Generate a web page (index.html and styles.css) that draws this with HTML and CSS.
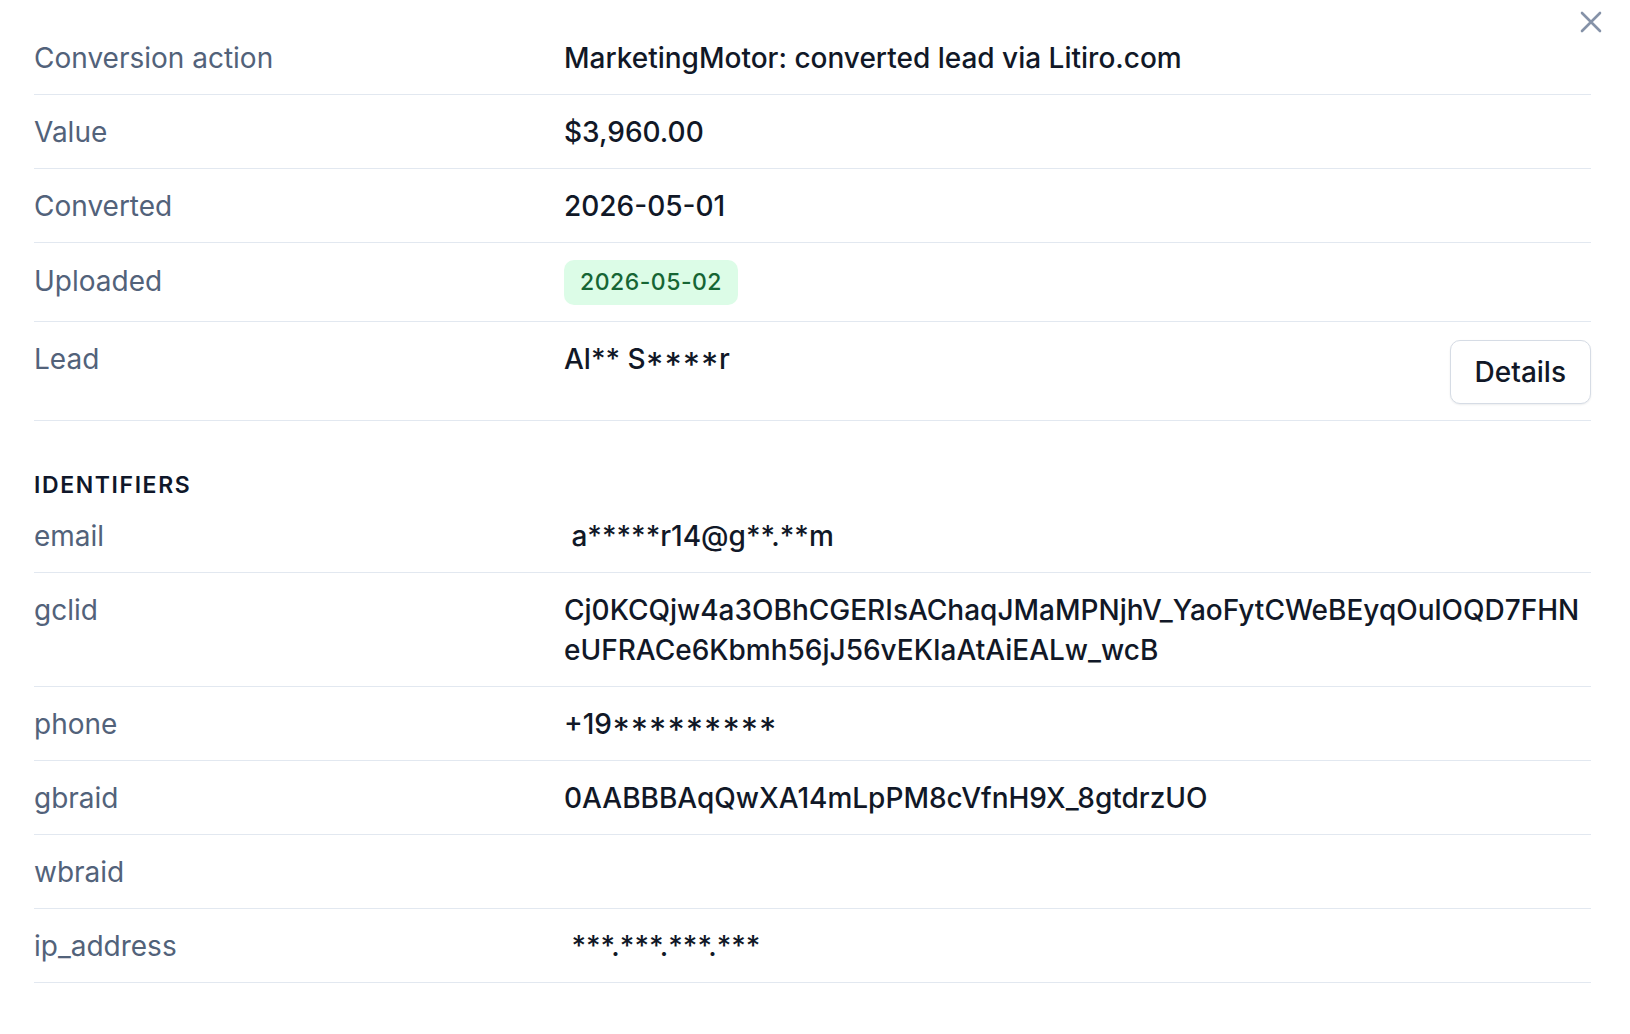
FILE: index.html
```html
<!DOCTYPE html>
<html lang="en">
<head>
    <meta charset="UTF-8">
    <title>Conversion details</title>
    <meta name="viewport" content="width=device-width, initial-scale=1.0">
    <link rel="stylesheet" href="styles.css">
</head>
<body>
    <div id="drawer">
        <button class="close-button" aria-label="Close">
            <svg width="22" height="22" viewBox="0 0 22 22" fill="none" stroke="currentColor" stroke-width="2.6" stroke-linecap="round">
                <path d="M2 2L20 20M20 2L2 20"/>
            </svg>
        </button>

        <div class="detail-list">
            <div class="detail-row">
                <div class="detail-label">Conversion action</div>
                <div class="detail-value">MarketingMotor: converted lead via Litiro.com</div>
            </div>
            <div class="detail-row">
                <div class="detail-label">Value</div>
                <div class="detail-value">$3,960.00</div>
            </div>
            <div class="detail-row">
                <div class="detail-label">Converted</div>
                <div class="detail-value">2026-05-01</div>
            </div>
            <div class="detail-row">
                <div class="detail-label label-badge">Uploaded</div>
                <div class="detail-value"><span class="badge badge-success">2026-05-02</span></div>
            </div>
            <div class="detail-row">
                <div class="detail-label">Lead</div>
                <div class="detail-value detail-value-split">
                    <span>Al** S<span class="case-stars">****</span>r</span>
                    <button class="secondary-button">Details</button>
                </div>
            </div>
        </div>

        <h3 class="section-title">IDENTIFIERS</h3>
        <div class="detail-list">
            <div class="detail-row">
                <div class="detail-label">email</div>
                <div class="detail-value masked"> a*****r14@g**.**m</div>
            </div>
            <div class="detail-row">
                <div class="detail-label">gclid</div>
                <div class="detail-value long-id">Cj0KCQjw4a3OBhCGERIsAChaqJMaMPNjhV_YaoFytCWeBEyqOulOQD7FHN<wbr>eUFRACe6Kbmh56jJ56vEKIaAtAiEALw_wcB</div>
            </div>
            <div class="detail-row">
                <div class="detail-label">phone</div>
                <div class="detail-value">+19<span class="case-stars">*********</span></div>
            </div>
            <div class="detail-row">
                <div class="detail-label">gbraid</div>
                <div class="detail-value">0AABBBAqQwXA14mLpPM8cVfnH9X_8gtdrzUO</div>
            </div>
            <div class="detail-row">
                <div class="detail-label">wbraid</div>
                <div class="detail-value"></div>
            </div>
            <div class="detail-row">
                <div class="detail-label">ip_address</div>
                <div class="detail-value masked"> ***.***.***.***</div>
            </div>
        </div>
    </div>
</body>
</html>
```

FILE: styles.css
```css
body {
    margin: 0;
    padding: 0;
    background-color: #ffffff;
    color: #0f172a;
    font-family: Inter, "Noto Sans", Arial, sans-serif;
}

#drawer {
    position: relative;
    padding: 21px 39px 40px 34px;
}

.close-button {
    position: absolute;
    top: 11px;
    right: 28px;
    padding: 0;
    border: none;
    background: none;
    color: #8592a8;
    cursor: pointer;
    line-height: 0;
}

.detail-row {
    display: grid;
    grid-template-columns: 530px 1fr;
    align-items: start;
    padding: 17px 0 16px;
    border-bottom: 1px solid #e2e8f0;
    font-size: 28px;
    line-height: 40px;
}

.detail-label {
    color: #52627a;
}

.detail-label.label-badge {
    padding-top: 1px;
}

.detail-value {
    color: #111827;
    font-weight: 500;
    min-height: 40px;
}

.detail-value.masked {
    white-space: pre;
}

.detail-value.long-id {
    overflow-wrap: anywhere;
}

.detail-value-split {
    display: flex;
    justify-content: space-between;
    align-items: flex-start;
}

/* asterisks after caps / digits use the case-sensitive form */
.case-stars {
    font-feature-settings: "case" 1;
}

.badge {
    display: inline-block;
    padding: 2px 16px 3px;
    border-radius: 10px;
    font-size: 23px;
    line-height: 40px;
    letter-spacing: 0.5px;
}

.badge-success {
    background-color: #dcfce7;
    color: #166534;
}

.secondary-button {
    margin-top: 1px;
    padding: 0 24px;
    height: 64px;
    border: 1px solid #d6dce5;
    border-radius: 10px;
    background-color: #ffffff;
    box-shadow: 0 1px 2px rgba(15, 23, 42, 0.08);
    color: #111827;
    font-family: inherit;
    font-size: 28px;
    font-weight: 500;
    cursor: pointer;
}

.section-title {
    margin: 50px 0 0;
    font-size: 23px;
    line-height: 28px;
    font-weight: 600;
    letter-spacing: 1.6px;
    color: #0f172a;
}
```
